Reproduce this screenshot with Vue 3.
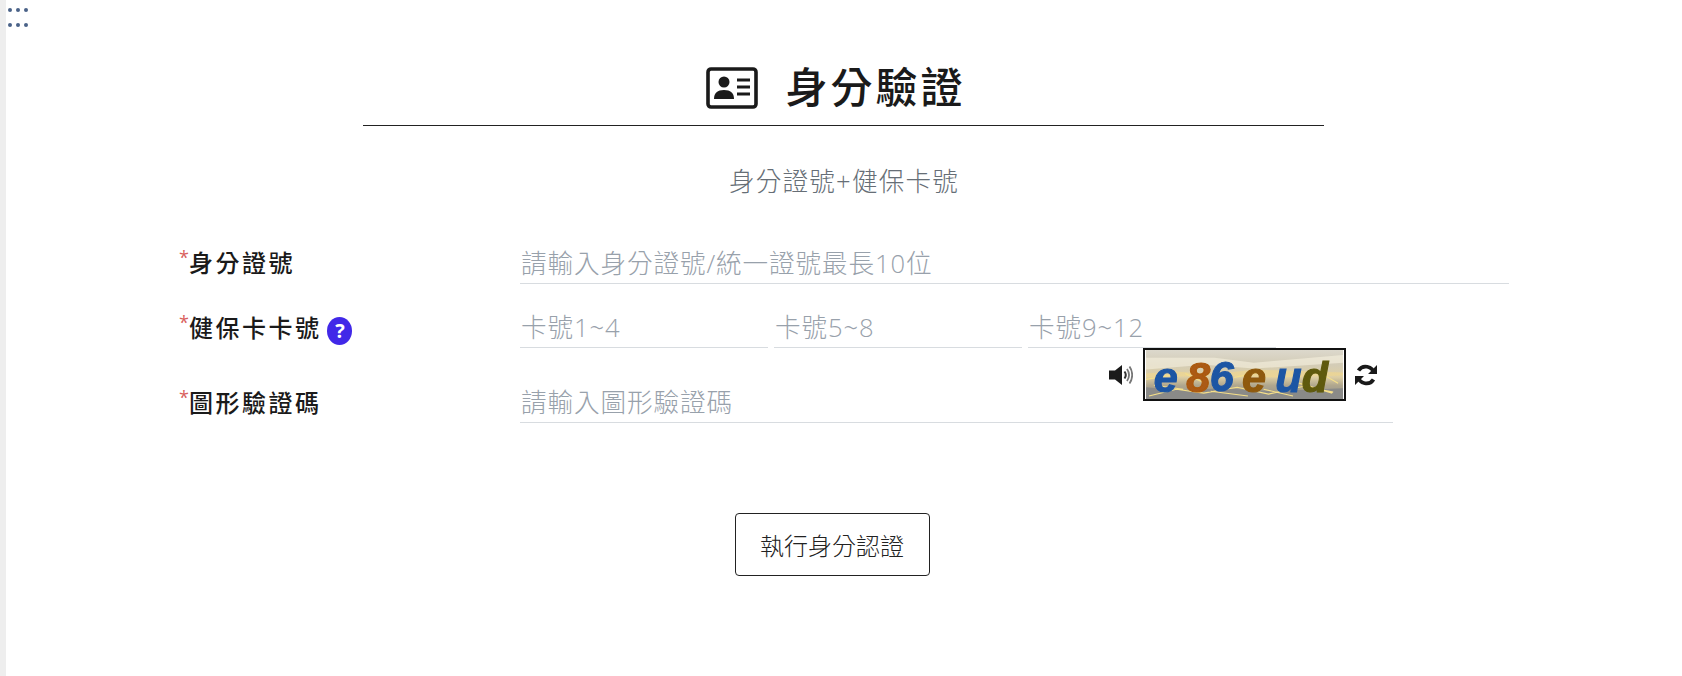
<template>
  <div class="page">
    <div class="drag-dots">
      <span v-for="n in 6" :key="n" class="dot"></span>
    </div>
    <main class="content">
      <header class="title">
        <svg class="id-icon" viewBox="0 0 52 42" width="52" height="42">
          <rect x="2" y="2" width="48" height="38" rx="3" fill="none" stroke="#1a1a1a" stroke-width="3.6" />
          <circle cx="18" cy="15" r="5.500" fill="#1a1a1a" />
          <path d="M8 32c0-6 3.500-9 10-9s10 3 10 9z" fill="#1a1a1a" />
          <path d="M31 13h13M31 20h13M31 27h13" stroke="#1a1a1a" stroke-width="2.800" />
        </svg>
        <h1>身分驗證</h1>
      </header>
      <div class="rule"></div>
      <p class="subtitle">身分證號+健保卡號</p>

      <form class="form" @submit.prevent>
        <div class="row row-id">
          <label class="label"><i>*</i>身分證號</label>
          <input class="field grow" placeholder="請輸入身分證號/統一證號最長10位" />
        </div>

        <div class="row row-card">
          <label class="label"><i>*</i>健保卡卡號<span class="help">?</span></label>
          <div class="card-fields">
            <input v-for="p in cardParts" :key="p" class="field" :placeholder="p" />
          </div>
        </div>

        <div class="row row-captcha">
          <label class="label"><i>*</i>圖形驗證碼</label>
          <div class="captcha-wrap">
            <input class="field grow" placeholder="請輸入圖形驗證碼" />
            <div class="captcha-tools">
              <svg class="tool speaker" viewBox="0 0 25 22" width="25" height="22">
                <path d="M1 6.500h6l7-5.500v20l-7-5.500H1z" fill="#1a1a1a" />
                <path d="M16.500 7.500c1.500 2 1.500 5 0 7" fill="none" stroke="#333" stroke-width="2" />
                <path d="M19 5c2.600 3.800 2.600 8.200 0 12M21.500 2.500c3.600 5 3.600 12 0 17" fill="none" stroke="#777" stroke-width="1.800" />
              </svg>
              <svg class="captcha" viewBox="0 0 201 50" width="203" height="53">
                <defs>
                  <linearGradient id="sky" x1="0" y1="0" x2="0" y2="1">
                    <stop offset="0" stop-color="#dcd8cc" />
                    <stop offset="0.3" stop-color="#d3ccb6" />
                    <stop offset="0.55" stop-color="#dfd0a4" />
                    <stop offset="0.72" stop-color="#b0a78e" />
                    <stop offset="1" stop-color="#8e8e8c" />
                  </linearGradient>
                  <filter id="soft"><feGaussianBlur stdDeviation="0.600" /></filter>
                </defs>
                <rect width="201" height="50" fill="url(#sky)" />
                <g filter="url(#soft)">
                  <path d="M0 8h70l40 5 91-8v8l-91 6-50-4-60 5z" fill="#f6f1df" opacity="0.6" />
                  <path d="M0 24l30-2 40 3 40-5 91 3v3l-70 2-60-2-71 2z" fill="#f4d98a" opacity="0.55" />
                  <path d="M0 38l38 3 40-2 50 3 73-3v11H0z" fill="#8a8a88" />
                  <path d="M3 47l28-7 28 4 34-6 32 7 36-8 30 6M8 36l30 4M66 42l38 5M120 40l30 7M150 32l40 12M172 20l24 14M40 24l24 12M0 30l30-5M90 28l30-6" fill="none" stroke="#f6e08a" stroke-width="1.100" />
                </g>
                <g class="captcha-text" font-size="44" filter="url(#soft)">
                  <text x="8" y="43" fill="#1f56a4" stroke="#1f56a4">e</text>
                  <text x="41" y="43" fill="#ab5a12" stroke="#ab5a12">8</text>
                  <text x="65" y="42" fill="#1f56a4" stroke="#1f56a4">6</text>
                  <text x="98" y="43" fill="#8f5a10" stroke="#8f5a10">e</text>
                  <text x="132" y="43" fill="#1f56a4" stroke="#1f56a4">u</text>
                  <text x="159" y="43" fill="#5f5a0a" stroke="#5f5a0a">d</text>
                </g>
              </svg>
              <svg class="tool refresh" viewBox="0 0 24 24" width="24" height="24">
                <path d="M20 10.500a8.500 8.500 0 0 0-15.500-3" fill="none" stroke="#1a1a1a" stroke-width="3.800" />
                <path d="M4 13.500a8.500 8.500 0 0 0 15.500 3" fill="none" stroke="#1a1a1a" stroke-width="3.800" />
                <path d="M23 2v9h-9zM1 22v-9h9z" fill="#1a1a1a" />
              </svg>
            </div>
          </div>
        </div>

        <div class="actions">
          <button class="submit" type="submit">執行身分認證</button>
        </div>
      </form>
    </main>
  </div>
</template>

<script setup>
const cardParts = ['卡號1~4', '卡號5~8', '卡號9~12']
</script>

<style>
html, body {
  margin: 0;
  background: #fff;
}
</style>

<style scoped>
.page {
  position: relative;
  height: 676px;
  border-left: 6px solid #eeeeee;
  box-sizing: border-box;
  font-family: "Open Sans", "Noto Sans CJK TC", sans-serif;
  color: #1a1a1a;
  overflow: hidden;
}

.drag-dots {
  position: absolute;
  top: 8px;
  left: 2px;
  display: grid;
  grid-template-columns: repeat(3, 4px);
  gap: 11px 4px;
}

.dot {
  width: 4px;
  height: 4px;
  border-radius: 50%;
  background: #4a6288;
}

.content {
  padding-top: 62px;
  display: flex;
  flex-direction: column;
  align-items: center;
}

.title {
  display: flex;
  align-items: center;
  gap: 27px;
  height: 50px;
  margin-right: 16px;
}

.id-icon {
  display: block;
  margin-top: 2px;
}

h1 {
  margin: 0;
  font-size: 42px;
  line-height: 50px;
  font-weight: 500;
  letter-spacing: 3px;
}

.rule {
  width: 961px;
  height: 1px;
  margin: 13px 2px 0 0;
  background: #222;
}

.subtitle {
  margin: 40px 0 0;
  font-size: 25.6px;
  line-height: 32px;
  font-weight: 300;
  letter-spacing: 1.2px;
  color: #666e76;
}

.form {
  width: 1330px;
  margin-top: 36px;
}

.row {
  display: grid;
  grid-template-columns: 341px 1fr;
  align-items: end;
}

.row-id {
  height: 50px;
}

.row-card {
  height: 64px;
}

.row-captcha {
  height: 75px;
}

.label {
  display: block;
  font-size: 24px;
  line-height: 40px;
  font-weight: 500;
  letter-spacing: 2.500px;
  white-space: nowrap;
}

.row-id .label {
  margin-bottom: 1px;
}

.label i {
  color: #d9605c;
  font-style: normal;
  font-weight: 400;
  font-size: 18px;
  vertical-align: 8px;
  letter-spacing: 0;
}

.help {
  display: inline-flex;
  align-items: center;
  justify-content: center;
  width: 25px;
  height: 28px;
  margin-left: 6px;
  border-radius: 50%;
  background: #4128e8;
  color: #fff;
  font-size: 20px;
  font-weight: 700;
  letter-spacing: 0;
  vertical-align: -1px;
  line-height: 1;
}

.field {
  display: block;
  min-width: 0;
  width: 100%;
  box-sizing: border-box;
  height: 40px;
  padding: 0 1px;
  border: 0;
  border-bottom: 1px solid #d8dce0;
  outline: none;
  background: transparent;
  font-family: inherit;
  font-size: 25.6px;
  font-weight: 300;
  letter-spacing: 0.9px;
  color: #333;
}

.field::placeholder {
  color: #98a1ab;
  opacity: 1;
}

.card-fields {
  display: grid;
  grid-template-columns: 248px 248px 248px;
  gap: 6px;
}

.captcha-wrap {
  position: relative;
  width: 873px;
}

.captcha-tools {
  position: absolute;
  left: 588px;
  bottom: 22px;
  display: flex;
  align-items: center;
  gap: 9px;
}

.captcha {
  display: block;
  box-sizing: border-box;
  border: 2px solid #111;
}

.captcha-text text {
  font-family: "Liberation Sans", sans-serif;
  font-style: italic;
  font-weight: 700;
  stroke-width: 1.2px;
}

.tool {
  display: block;
}

.speaker {
  margin-right: 1px;
}

.refresh {
  margin-left: -1px;
}

.actions {
  display: flex;
  justify-content: center;
  margin-top: 90px;
  padding-right: 24px;
}

.submit {
  width: 195px;
  height: 63px;
  border: 1px solid #222;
  border-radius: 4px;
  background: #fff;
  font-family: inherit;
  font-size: 24px;
  font-weight: 300;
  color: #222;
  cursor: pointer;
}
</style>
